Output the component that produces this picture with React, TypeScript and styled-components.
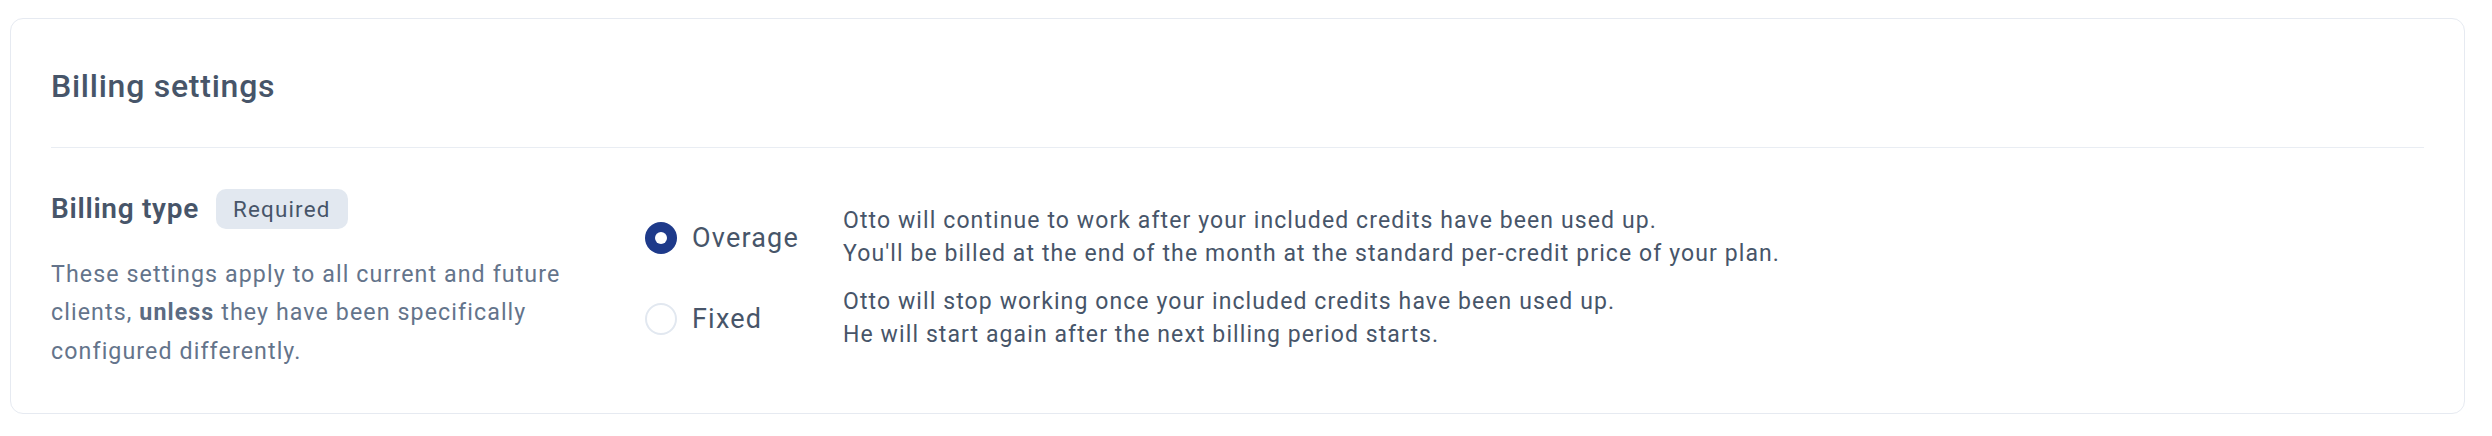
import React from "react";
import styled, { createGlobalStyle } from "styled-components";

const GlobalStyle = createGlobalStyle`
  html, body {
    margin: 0;
    padding: 0;
    background: #ffffff;
  }
  body {
    font-family: Roboto, "Noto Sans", "Liberation Sans", sans-serif;
    -webkit-font-smoothing: antialiased;
  }
  * { box-sizing: border-box; }
`;

const Page = styled.div`
  padding: 18px 27px 24px 10px;
`;

const Card = styled.section`
  background: #ffffff;
  border: 1.6px solid #e6eaf1;
  border-radius: 13px;
  padding: 43px 40px 43px;
`;

const Title = styled.h2`
  margin: 0;
  font-size: 32px;
  line-height: 48px;
  font-weight: 500;
  color: #475569;
  letter-spacing: 0.75px;
  padding-bottom: 37px;
  border-bottom: 1.6px solid #e9edf3;
`;

const Section = styled.div`
  display: flex;
  align-items: center;
  padding-top: 41px;
`;

const LeftCol = styled.div`
  width: 560px;
  flex-shrink: 0;
`;

const LabelRow = styled.div`
  display: flex;
  align-items: center;
  gap: 17px;
  height: 40px;
`;

const FieldLabel = styled.span`
  font-size: 28px;
  line-height: 40px;
  font-weight: 600;
  color: #475569;
  letter-spacing: 0.7px;
`;

const Badge = styled.span`
  display: inline-flex;
  align-items: center;
  height: 40px;
  padding: 0 17px;
  border-radius: 10px;
  background: #e2e8f0;
  color: #475569;
  font-size: 22.4px;
  letter-spacing: 1.2px;
`;

const Help = styled.p`
  margin: 26px 0 0;
  font-size: 23.2px;
  line-height: 38.4px;
  color: #64748b;
  letter-spacing: 1.1px;

  strong {
    font-weight: 700;
    color: #5b6b82;
  }
`;

const Options = styled.div`
  display: flex;
  flex-direction: column;
  gap: 16px;
  margin-left: 34px;
  margin-bottom: 3px;
`;

const OptionRow = styled.label`
  display: flex;
  align-items: center;
`;

const Radio = styled.span<{ $checked?: boolean }>`
  width: 32px;
  height: 32px;
  flex-shrink: 0;
  border-radius: 50%;
  background: ${(p) => (p.$checked ? "#1e3a8a" : "#ffffff")};
  border: ${(p) => (p.$checked ? "none" : "2px solid #e2e8f0")};
  display: flex;
  align-items: center;
  justify-content: center;

  &::after {
    content: "";
    display: ${(p) => (p.$checked ? "block" : "none")};
    width: 12px;
    height: 12px;
    border-radius: 50%;
    background: #ffffff;
  }
`;

const OptionLabel = styled.span`
  width: 151px;
  margin-left: 15px;
  font-size: 27px;
  color: #475569;
  letter-spacing: 1.2px;
`;

const OptionDesc = styled.div`
  font-size: 23px;
  line-height: 32.5px;
  color: #475569;
  letter-spacing: 1.1px;
`;

const options = [
  {
    label: "Overage",
    checked: true,
    lines: [
      "Otto will continue to work after your included credits have been used up.",
      "You'll be billed at the end of the month at the standard per-credit price of your plan.",
    ],
  },
  {
    label: "Fixed",
    checked: false,
    lines: [
      "Otto will stop working once your included credits have been used up.",
      "He will start again after the next billing period starts.",
    ],
  },
];

export default function App() {
  return (
    <>
      <GlobalStyle />
      <Page>
        <Card>
          <Title>Billing settings</Title>
          <Section>
            <LeftCol>
              <LabelRow>
                <FieldLabel>Billing type</FieldLabel>
                <Badge>Required</Badge>
              </LabelRow>
              <Help>
                These settings apply to all current and future clients,{" "}
                <strong>unless</strong> they have been specifically configured
                differently.
              </Help>
            </LeftCol>
            <Options>
              {options.map((o) => (
                <OptionRow key={o.label}>
                  <Radio $checked={o.checked} />
                  <OptionLabel>{o.label}</OptionLabel>
                  <OptionDesc>
                    {o.lines.map((l) => (
                      <div key={l}>{l}</div>
                    ))}
                  </OptionDesc>
                </OptionRow>
              ))}
            </Options>
          </Section>
        </Card>
      </Page>
    </>
  );
}
